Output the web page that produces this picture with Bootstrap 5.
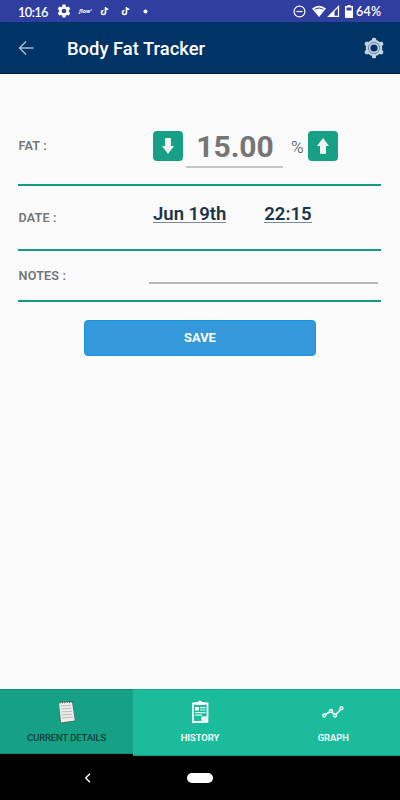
<!DOCTYPE html>
<html lang="en">
<head>
<meta charset="utf-8">
<meta name="viewport" content="width=device-width, initial-scale=1">
<title>Body Fat Tracker</title>
<link href="https://cdn.jsdelivr.net/npm/bootstrap@5.3.0/dist/css/bootstrap.min.css" rel="stylesheet">
<style>
body{font-family:Roboto,"Liberation Sans",sans-serif;background:#fafafa;height:800px;overflow:hidden;color:#757575}
svg{display:block;flex:none}
.statusbar{height:22px;background:#303f9f;color:#fff;font:500 13px/22px Lato,Roboto,sans-serif;padding:0 17px 0 18px}
.clock{width:30px;font-size:12.8px;letter-spacing:-.6px;font-weight:600;padding-top:2px}
.flow-mark{font:italic 700 5.5px/22px "Open Sans",sans-serif;width:13px}
.level{font-size:12.5px;font-weight:600;letter-spacing:.3px;width:27px;padding-top:2px}
.appbar{height:52px;background:#003366;border-bottom:1px solid #001f45;padding:0 15px 0 18px}
.appbar h1{font-size:18.4px;line-height:24px;font-weight:500;color:#fff;margin-left:33px;padding-top:3px}
.entry{margin:34px 19px 0 18px}
.field{border-bottom:2px solid #139a80}
.field-label{width:135px;padding-left:.6px;font-size:12.6px;font-weight:600;line-height:16px;letter-spacing:.15px}
.fat-row{height:78px}
.fat-row .unit{padding-top:1px}
.date-row{height:65px}
.notes-row{height:51px}
.step{width:30px;height:30px;border-radius:4px;background:#16a085;margin-top:-1px}
.reading{width:97px;height:41px;margin:3px 0 0 3px;border-bottom:2px solid #c4c4c4;font-size:30px;line-height:40px;font-weight:700;color:#757575;padding-left:1px}
.unit{width:17px;margin-left:8px;font-size:17px;line-height:20px;font-weight:300;color:#444}
.stamp{font-size:18.5px;line-height:17px;font-weight:600;color:#1b3548;border-bottom:1px solid #7d8b97;height:17px;margin-top:-6px}
.note-line{width:229px;height:2px;margin:15px 0 0 -4px;background:#b9b9b9}
.save{width:232px;height:36px;background:#3498db;border:1px solid #1595e2;border-radius:4px;font-size:12.9px;font-weight:700;color:#fff;margin-top:18px}
.tabs{height:67px;background:#000}
.tab-item{width:33.333%;padding-top:10px;background:#1abc9c;border-top:1px solid #17a88b;border-bottom:1px solid #159a80;color:#fff;font-size:9.400px;font-weight:600;line-height:14px}
.tab-item.current{height:65px;background:#16a085;border-color:#138b74;color:#06241f;font-size:9.300px;font-weight:400}
.tab-item svg{margin-bottom:7px}
.sysnav{height:44px;background:#000}
.home{width:26px;height:10px;border-radius:5px;background:#fff;margin-left:95px}
</style>
<script src="https://cdn.jsdelivr.net/npm/bootstrap@5.3.0/dist/js/bootstrap.bundle.min.js"></script>
</head>
<body class="d-flex flex-column">
<div class="statusbar d-flex align-items-center">
  <span class="clock">10:16</span>
  <svg width="14" height="14" viewBox="0 0 24 24" style="margin-left:9px"><path fill="#fff" fill-rule="evenodd" d="M9.5 1h5l.6 3.2 2.1 1.2 3.1-1 2.4 4.2-2.4 2.2v2.5l2.4 2.2-2.4 4.2-3.1-1-2.1 1.2-.6 3.3h-5l-.6-3.3-2.1-1.2-3.1 1-2.4-4.2 2.4-2.2v-2.5L1.3 8.600l2.4-4.2 3.1 1 2.1-1.200zM12 8a4 4 0 1 0 0 8 4 4 0 0 0 0-8z"/></svg>
  <span class="flow-mark ms-2">flow'</span>
  <svg width="10" height="10" viewBox="0 0 10 10" style="margin-left:8px"><path d="M5.500 1v5.500a2 2 0 1 1-2-2M5.500 1c.2 1.500 1.200 2.300 2.800 2.400" fill="none" stroke="#fff" stroke-width="1.600"/></svg>
  <svg width="10" height="10" viewBox="0 0 10 10" style="margin-left:11px"><path d="M5.500 1v5.500a2 2 0 1 1-2-2M5.500 1c.2 1.500 1.200 2.300 2.800 2.400" fill="none" stroke="#fff" stroke-width="1.600"/></svg>
  <svg width="5" height="5" viewBox="0 0 5 5" style="margin-left:12px"><circle cx="2.500" cy="2.500" r="2" fill="#fff"/></svg>
  <svg class="ms-auto" width="13" height="13" viewBox="0 0 13 13"><g fill="none" stroke="#fff" stroke-width="1.200"><circle cx="6.500" cy="6.500" r="5.400"/><path d="M3.500 6.500h6"/></g></svg>
  <svg width="28" height="13" viewBox="0 0 28 13" style="margin-left:6px"><path d="M0 3.500Q7-2 14 3.500L7 12z" fill="#fff"/><path d="M2.700 4.300Q7 1.500 11.300 4.300" fill="none" stroke="#303f9f" stroke-width="1"/><path d="M26.500 1.500V11.400H16.600z" fill="none" stroke="#fff" stroke-width="1.200"/><path d="M22.500 5.500V11.500H16.500z" fill="#fff"/></svg>
  <svg width="8" height="13" viewBox="0 0 8 13" style="margin:0 3px 0 5px"><path d="M2.500 0h3v1H8v12H0V1h2.500z" fill="#fff"/><path d="M1.500 2.500h5v3h-5z" fill="#303f9f"/></svg>
  <span class="level">64%</span>
</div>
<header class="appbar d-flex align-items-center">
  <svg width="16" height="16" viewBox="0 0 16 16"><path d="M8 1.500L1.500 8 8 14.500M1.500 8H15.500" fill="none" stroke="#a9b8cb" stroke-width="1.500"/></svg>
  <h1 class="mb-0">Body Fat Tracker</h1>
  <svg class="ms-auto" width="22" height="22" viewBox="0 0 22 22"><g fill="#c3d2e2"><circle cx="11" cy="11" r="8.300"/><rect x="8.900" y=".7" width="4.200" height="20.600" rx="1.500"/><rect x="8.900" y=".7" width="4.200" height="20.600" rx="1.500" transform="rotate(60 11 11)"/><rect x="8.900" y=".7" width="4.200" height="20.600" rx="1.500" transform="rotate(120 11 11)"/></g><circle cx="11" cy="11" r="5.700" fill="none" stroke="#557896" stroke-width=".8"/><circle cx="11" cy="11" r="3.600" fill="#003366"/></svg>
</header>
<main class="flex-grow-1">
  <div class="entry">
    <div class="field fat-row d-flex align-items-center">
      <span class="field-label">FAT :</span>
      <span class="step d-flex align-items-center justify-content-center"><svg width="14" height="18" viewBox="0 0 14 18"><path d="M5 1h4q1 0 1 1v7h3L7 17 1 9h3V2q0-1 1-1z" fill="#f1f3f3"/></svg></span>
      <span class="reading text-center">15.00</span>
      <span class="unit">%</span>
      <span class="step d-flex align-items-center justify-content-center"><svg width="14" height="18" viewBox="0 0 14 18"><path d="M5 17h4q1 0 1-1V9h3L7 1 1 9h3v7q0 1 1 1z" fill="#f1f3f3"/></svg></span>
    </div>
    <div class="field date-row d-flex align-items-center">
      <span class="field-label">DATE :</span>
      <span class="stamp">Jun 19th</span>
      <span class="stamp" style="margin-left:38px">22:15</span>
    </div>
    <div class="field notes-row d-flex align-items-center">
      <span class="field-label">NOTES :</span>
      <span class="note-line"></span>
    </div>
  </div>
  <button class="save btn d-flex align-items-center justify-content-center mx-auto p-0">SAVE</button>
</main>
<nav class="tabs d-flex">
  <div class="tab-item current d-flex flex-column align-items-center">
    <svg width="20" height="24" viewBox="0 0 20 24"><path d="M2 2.500L15.500 1.500 18.500 21 5 23.500 2.500 21z" fill="#4d6b62"/><path d="M2 2.500L15 2 17.800 20.500 4 22.500z" fill="#ececec"/><path d="M4 6l10-.6M4.200 9l10.300-.7M4.500 12l10.500-.8M4.800 15l10.500-.8M5 18l10.800-.9" stroke="#b5b5b5" stroke-width=".9"/><path d="M2.500 2.500L15.500 1.800" stroke="#4c4c4c" stroke-width="2" stroke-dasharray="1 1.400"/></svg>
    <span>CURRENT DETAILS</span>
  </div>
  <div class="tab-item d-flex flex-column align-items-center">
    <svg width="18" height="24" viewBox="0 0 18 24"><path d="M2 3.500h14.500v13L11.500 22H2z" fill="none" stroke="#fff" stroke-width="1.800"/><path d="M4.500 2H7q2-3 4 0h2.500v3h-9z" fill="#fff"/><path d="M4 7h4v3.500H4zM10.500 22.800v-6.300h6.800v6.300z" fill="#fff"/><path d="M9 7.600h5.500M9 10h5.500M4 12.700h10.500M4 15.200h7" stroke="#d9f5ee" stroke-width="1.200"/><path d="M12.500 21l3.300-3.200" stroke="#8adfcc" stroke-width="1"/></svg>
    <span>HISTORY</span>
  </div>
  <div class="tab-item d-flex flex-column align-items-center">
    <svg width="22" height="24" viewBox="0 0 22 24"><path d="M2 15.500L9 11 13 15.500 19.500 8.500" fill="none" stroke="#fff" stroke-width="1.500"/><g fill="#1abc9c" stroke="#fff" stroke-width="1.300"><circle cx="2.300" cy="15.500" r="1.500"/><circle cx="9" cy="11" r="1.500"/><circle cx="13" cy="15.500" r="1.500"/><circle cx="19.500" cy="8.300" r="1.500"/></g></svg>
    <span>GRAPH</span>
  </div>
</nav>
<div class="sysnav d-flex align-items-center">
  <svg width="8" height="10" viewBox="0 0 8 10" style="margin-left:84px"><path d="M6 .7L1.700 5 6 9.300" fill="none" stroke="#fff" stroke-width="1.400"/></svg>
  <span class="home"></span>
</div>
</body>
</html>
